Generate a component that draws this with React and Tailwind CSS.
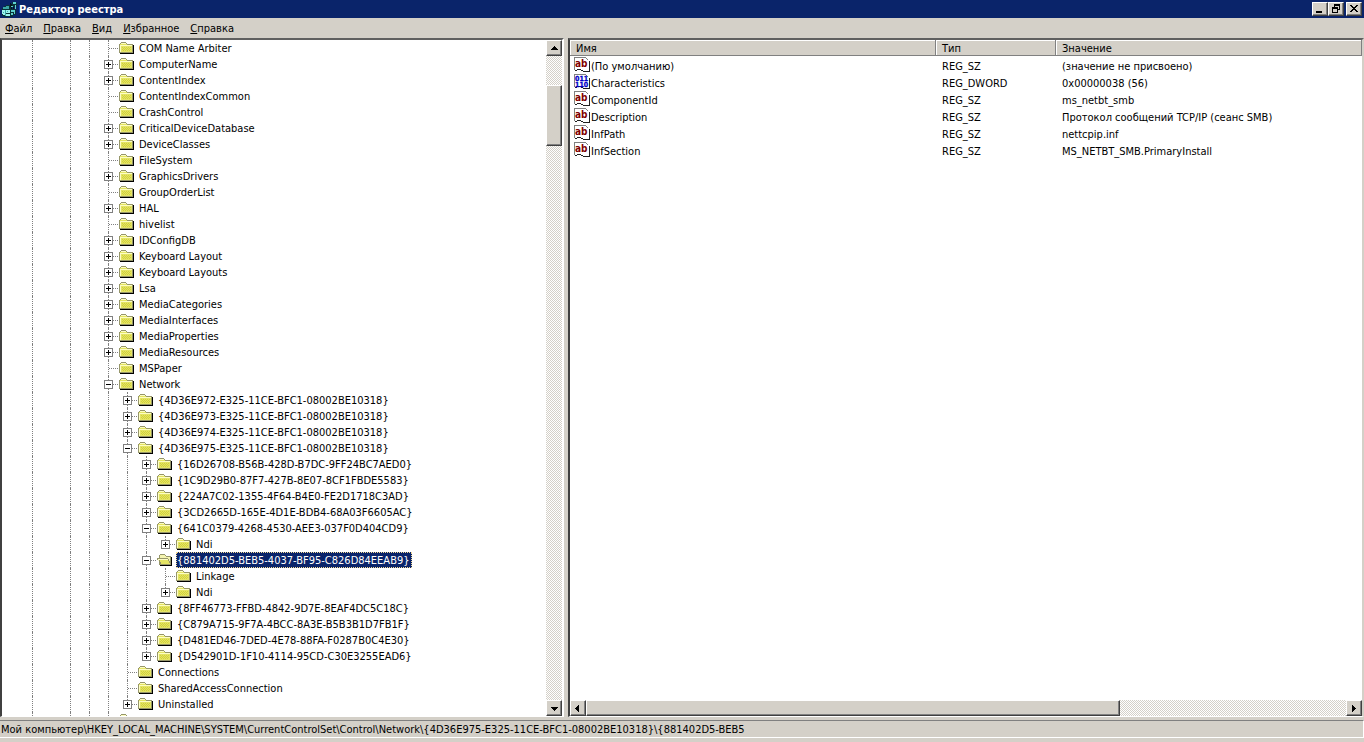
import { useState } from 'react';
import { clsx } from 'clsx';

const GUID_975 = '{4D36E975-E325-11CE-BFC1-08002BE10318}';

// guides: one character for each ancestor column, '|' draws the line through
const TREE = [
  { name: 'COM Name Arbiter' },
  { name: 'ComputerName', box: '+' },
  { name: 'ContentIndex', box: '+' },
  { name: 'ContentIndexCommon' },
  { name: 'CrashControl' },
  { name: 'CriticalDeviceDatabase', box: '+' },
  { name: 'DeviceClasses', box: '+' },
  { name: 'FileSystem' },
  { name: 'GraphicsDrivers', box: '+' },
  { name: 'GroupOrderList' },
  { name: 'HAL', box: '+' },
  { name: 'hivelist' },
  { name: 'IDConfigDB', box: '+' },
  { name: 'Keyboard Layout', box: '+' },
  { name: 'Keyboard Layouts', box: '+' },
  { name: 'Lsa', box: '+' },
  { name: 'MediaCategories', box: '+' },
  { name: 'MediaInterfaces', box: '+' },
  { name: 'MediaProperties', box: '+' },
  { name: 'MediaResources', box: '+' },
  { name: 'MSPaper' },
  { name: 'Network', box: '-' },
  { name: '{4D36E972-E325-11CE-BFC1-08002BE10318}', box: '+', guides: '|' },
  { name: '{4D36E973-E325-11CE-BFC1-08002BE10318}', box: '+', guides: '|' },
  { name: '{4D36E974-E325-11CE-BFC1-08002BE10318}', box: '+', guides: '|' },
  { name: GUID_975, box: '-', guides: '|' },
  { name: '{16D26708-B56B-428D-B7DC-9FF24BC7AED0}', box: '+', guides: '||' },
  { name: '{1C9D29B0-87F7-427B-8E07-8CF1FBDE5583}', box: '+', guides: '||' },
  { name: '{224A7C02-1355-4F64-B4E0-FE2D1718C3AD}', box: '+', guides: '||' },
  { name: '{3CD2665D-165E-4D1E-BDB4-68A03F6605AC}', box: '+', guides: '||' },
  { name: '{641C0379-4268-4530-AEE3-037F0D404CD9}', box: '-', guides: '||' },
  { name: 'Ndi', box: '+', guides: '|||', last: true },
  { name: '{881402D5-BEB5-4037-BF95-C826D84EEAB9}', box: '-', guides: '||', open: true },
  { name: 'Linkage', guides: '|||' },
  { name: 'Ndi', box: '+', guides: '|||', last: true },
  { name: '{8FF46773-FFBD-4842-9D7E-8EAF4DC5C18C}', box: '+', guides: '||' },
  { name: '{C879A715-9F7A-4BCC-8A3E-B5B3B1D7FB1F}', box: '+', guides: '||' },
  { name: '{D481ED46-7DED-4E78-88FA-F0287B0C4E30}', box: '+', guides: '||' },
  { name: '{D542901D-1F10-4114-95CD-C30E3255EAD6}', box: '+', guides: '||', last: true },
  { name: 'Connections', guides: '|' },
  { name: 'SharedAccessConnection', guides: '|' },
  { name: 'Uninstalled', box: '+', guides: '|', last: true },
  { name: 'NetworkProvider' }
];

const VALUES = [
  { name: '(По умолчанию)', type: 'REG_SZ', data: '(значение не присвоено)' },
  { name: 'Characteristics', type: 'REG_DWORD', data: '0x00000038 (56)' },
  { name: 'ComponentId', type: 'REG_SZ', data: 'ms_netbt_smb' },
  { name: 'Description', type: 'REG_SZ', data: 'Протокол сообщений TCP/IP (сеанс SMB)' },
  { name: 'InfPath', type: 'REG_SZ', data: 'nettcpip.inf' },
  { name: 'InfSection', type: 'REG_SZ', data: 'MS_NETBT_SMB.PrimaryInstall' }
];

const MENU = ['Файл', 'Правка', 'Вид', 'Избранное', 'Справка'];

const raised =
  'bg-[#d4d0c8] border border-t-white border-l-white border-r-[#404040] border-b-[#404040] shadow-[inset_-1px_-1px_0_#808080]';
const track =
  'bg-[repeating-conic-gradient(#ffffff_0_25%,#d4d0c8_0_50%)] bg-[length:2px_2px]';

const AppIcon = () => (
  <svg width="16" height="16" viewBox="0 0 16 16" shapeRendering="crispEdges" aria-hidden="true">
    <path d="M0 7h1V6h1V5h2V4h4v2h2v2h4v6h-3v2H2v-1H0z" fill="#0a3238" />
    <path d="M1 6h3v2H1zM4 5h3v3H4z" fill="#3aa6a6" />
    <path d="M0 9h3v5H1v-1H0zM4 9h4v3H4zM3 13h5v2H3z" fill="#9af4ee" />
    <path d="M3 9h1v6H3zM5 10h1v1H5zM1 11h1v1H1z" fill="#3aa6a6" />
    <path d="M9 9h4v2H9zM9 12h2v2H9zM12 11h1v2h-1z" fill="#5ed0cc" />
    <path d="M8 2h1v1h1v5H9V6H8zM11 4h1v4h-1z" fill="#06181c" />
    <path d="M10 1h4v1h1v3h-1v1h-4z" fill="#0a3238" />
    <path d="M11 1h3v2h-3zM13 4h1v4h-1zM9 5h2v1H9z" fill="#5ed0cc" />
  </svg>
);

const Folder = ({ open }) => (
  <svg className="shrink-0" width="17" height="16" viewBox="0 0 17 16" shapeRendering="crispEdges" aria-hidden="true">
    {open ? (
      <>
        <path d="M4 2h5v1h1v1h5v9H3V3h1z" fill="#96966a" />
        <path d="M4 3h5v1h1v1h4v7H4z" fill="#f4f4b0" />
        <path d="M1 6h11v1h1v2h1v2h1v2H4v-2H3V9H2V8H1z" fill="#96966a" />
        <path d="M2 7h10v2h1v2h1v1H5v-2H4V8H2z" fill="#e4e464" />
        <path d="M2 7h10v1H3v1H2z" fill="#fdfdc4" />
        <path d="M15 5h1v9H4v-1h11z" fill="#000000" />
      </>
    ) : (
      <>
        <path d="M3 2h5v1h1v1h6v9H1V4h1V3h1z" fill="#96966a" />
        <path d="M3 3h5v1h1v1h5v7H2V4h1z" fill="#e4e464" />
        <path d="M3 3h5v1H3zM2 5h12v1H3v6H2z" fill="#fdfdc4" />
        <path
          d="M4 7h1v1H4zM6 7h1v1H6zM8 7h1v1H8zM10 7h1v1h-1zM12 7h1v1h-1zM5 8h1v1H5zM7 8h1v1H7zM9 8h1v1H9zM11 8h1v1h-1zM4 9h1v1H4zM6 9h1v1H6zM8 9h1v1H8zM10 9h1v1h-1zM12 9h1v1h-1zM5 10h1v1H5zM7 10h1v1H7zM9 10h1v1H9zM11 10h1v1h-1z"
          fill="#d2d23c"
        />
        <path d="M15 5h1v9H2v-1h13z" fill="#000000" />
      </>
    )}
  </svg>
);

const ValueIcon = ({ binary }) => (
  <svg className="shrink-0" width="17" height="16" viewBox="0 0 17 16" aria-hidden="true">
    <g shapeRendering="crispEdges">
      <path d="M1 1h11l3 3v10H1z" fill="#ffffff" />
      <path d="M0 0h12v1H1v12H0zM12 1h1v1h-1zM13 2h1v1h-1z" fill="#808080" />
      <path d="M15 4h1v11h-2v-1h1zM1 13h2v1H1zM3 12h4v1H3zM7 13h2v1H7zM9 14h5v1H9z" fill="#202020" />
    </g>
    {binary ? (
      <g fill="#0000c8" stroke="#0000c8" strokeWidth="0.3" fontFamily="'DejaVu Sans Condensed', 'DejaVu Sans', sans-serif" fontWeight="bold" fontSize="7">
        <text x="1" y="7">011</text>
        <text x="1" y="13">110</text>
      </g>
    ) : (
      <text x="1" y="10" fill="#800000" fontFamily="'DejaVu Sans Condensed', 'DejaVu Sans', sans-serif" fontWeight="bold" fontSize="10">
        ab
      </text>
    )}
  </svg>
);

const WindowButton = ({ label, className, children }) => (
  <button type="button" aria-label={label} className={clsx('flex h-[14px] w-4 items-center justify-center', raised, className)}>
    <svg width="12" height="10" viewBox="0 0 12 10" shapeRendering="crispEdges" aria-hidden="true">
      {children}
    </svg>
  </button>
);

const ARROWS = {
  up: 'M3 6h7v-1H9v-1H8v-1H7v-1H6v1H5v1H4v1H3z',
  down: 'M3 3h7v1H9v1H8v1H7v1H6v-1H5v-1H4v-1H3z',
  left: 'M7 1v7H6v-1H5v-1H4v-1H3v-1h1v-1h1v-1h1v-1z',
  right: 'M4 1v7h1v-1h1v-1h1v-1h1v-1H7v-1H6v-1H5v-1z'
};

const ScrollButton = ({ dir, label }) => (
  <button type="button" aria-label={label} className={clsx('flex size-4 shrink-0 items-center justify-center', raised)}>
    <svg width="12" height="9" viewBox="0 0 12 9" shapeRendering="crispEdges" aria-hidden="true">
      <path d={ARROWS[dir]} />
    </svg>
  </button>
);

const Guide = ({ line = true }) => (
  <span className="flex w-[19px] shrink-0 pl-[9px]">
    {line && <span className="border-l border-dotted border-[#808080]" />}
  </span>
);

const Branch = ({ box, last, name }) => (
  <span className="relative flex w-[19px] shrink-0 pl-[9px]">
    <span className={clsx('border-l border-dotted border-[#808080]', last && 'h-2')} />
    <span className="mt-2 h-px flex-1 border-t border-dotted border-[#808080]" />
    {box && (
      <button
        type="button"
        aria-label={(box === '+' ? 'Развернуть ' : 'Свернуть ') + name}
        className="absolute top-1 left-[5px] size-[9px] border border-[#808080] bg-white"
      >
        <svg width="7" height="7" viewBox="0 0 7 7" shapeRendering="crispEdges" className="block" aria-hidden="true">
          <path d={box === '+' ? 'M1 3h5v1H1zM3 1h1v5H3z' : 'M1 3h5v1H1z'} />
        </svg>
      </button>
    )}
  </span>
);

const TreeRow = ({ item, selected, onSelect }) => (
  <li className="flex h-4">
    <Guide />
    <Guide line={false} />
    <Guide />
    <Guide />
    {(item.guides || '').split('').map((g, idx) => (
      <Guide key={idx} line={g === '|'} />
    ))}
    <Branch box={item.box} last={item.last} name={item.name} />
    <Folder open={item.open} />
    <button
      type="button"
      onClick={onSelect}
      className={clsx(
        'ml-[3px] border border-dotted pt-0.5 pr-px leading-3 whitespace-nowrap',
        selected ? 'border-[#f5db95] bg-[#0a246a] text-white' : 'border-transparent'
      )}
    >
      {item.name}
    </button>
  </li>
);

const TreePane = () => {
  const [selected, setSelected] = useState(32);

  return (
    <section aria-label="Разделы реестра" className="flex w-[564px] shrink-0 border-2 border-b border-[#404040] border-t-[#606060] border-r-white border-b-white bg-white">
      <ul className="min-h-0 flex-1 overflow-hidden pl-[21px]">
        {TREE.map((item, idx) => (
          <TreeRow key={idx} item={item} selected={idx === selected} onSelect={() => setSelected(idx)} />
        ))}
      </ul>
      <div className={clsx('flex w-4 flex-col', track)}>
        <ScrollButton dir="up" label="Вверх" />
        <div className="flex min-h-0 flex-1 flex-col">
          <div className="h-[4.5%]" />
          <div className={clsx('h-[9.5%]', raised)} />
        </div>
        <ScrollButton dir="down" label="Вниз" />
      </div>
    </section>
  );
};

const HeaderCell = ({ className, children }) => (
  <th
    scope="col"
    className={clsx('h-4 border-r border-b border-[#808080] bg-[#d4d0c8] pt-0.5 pl-1.5 text-left leading-[13px] font-normal shadow-[inset_1px_1px_0_#ffffff]', className)}
  >
    {children}
  </th>
);

const ValuesPane = () => (
  <section aria-label="Параметры" className="flex min-w-0 flex-1 flex-col border-2 border-b border-[#404040] border-t-[#606060] border-r-[#d4d0c8] border-b-white bg-white">
    <div className="min-h-0 flex-1 overflow-hidden">
      <table className="w-full table-fixed border-separate border-spacing-0">
        <thead>
          <tr>
            <HeaderCell className="w-[366px]">Имя</HeaderCell>
            <HeaderCell className="w-[120px]">Тип</HeaderCell>
            <HeaderCell>Значение</HeaderCell>
          </tr>
        </thead>
        <tbody>
          {VALUES.map((value) => (
            <tr key={value.name} className="h-[17px]">
              <td className="p-0 pl-1">
                <span className="flex h-[17px] items-center">
                  <ValueIcon binary={value.type === 'REG_DWORD'} />
                  <span className="pt-1 leading-[13px]">{value.name}</span>
                </span>
              </td>
              <td className="p-0 pt-1 pl-1.5 leading-[13px]">{value.type}</td>
              <td className="p-0 pt-1 pl-1.5 leading-[13px]">{value.data}</td>
            </tr>
          ))}
        </tbody>
      </table>
    </div>
    <div className={clsx('flex h-4', track)}>
      <ScrollButton dir="left" label="Влево" />
      <div className="flex min-w-0 flex-1">
        <div className={clsx('w-[70.3%]', raised)} />
      </div>
      <ScrollButton dir="right" label="Вправо" />
    </div>
  </section>
);

const App = () => (
  <div className="flex h-screen flex-col overflow-hidden bg-[#d4d0c8] font-['DejaVu_Sans_Condensed','DejaVu_Sans',sans-serif] text-[11px] text-black">
    <header className="flex h-[18px] items-center bg-[#0a246a] pr-0.5 pl-0.5 text-white">
      <AppIcon />
      <h1 className="flex-1 pt-px pl-px text-[11px] leading-4 font-bold">Редактор реестра</h1>
      <WindowButton label="Свернуть">
        <path d="M2 7h6v2H2z" />
      </WindowButton>
      <WindowButton label="Восстановить">
        <path d="M4 0h6v6H8V5h1V2H5v1H4zM2 3h6v6H2zM3 5v3h4V5z" fillRule="evenodd" />
      </WindowButton>
      <WindowButton label="Закрыть" className="ml-0.5">
        <path d="M2 1h2v1h1v1h2V2h1V1h2v1H9v1H8v1H7v1h1v1h1v1h1v1H8V7H7V6H5v1H4v1H2V7h1V6h1V5h1V4H4V3H3V2H2z" />
      </WindowButton>
    </header>

    <nav className="flex h-5 items-center gap-[11px] pt-0.5 pl-[5px]">
      {MENU.map((label) => (
        <button key={label} type="button" className="leading-[18px]">
          <span className="underline underline-offset-1">{label[0]}</span>
          {label.slice(1)}
        </button>
      ))}
    </nav>

    <main className="flex min-h-0 flex-1 gap-1">
      <TreePane />
      <ValuesPane />
    </main>

    <footer className="pt-[3px] pb-1">
      <p className="h-[18px] overflow-hidden border border-l-0 border-t-[#808080] border-r-white border-b-white pl-px leading-[17px] whitespace-nowrap">
        {`Мой компьютер\\HKEY_LOCAL_MACHINE\\SYSTEM\\CurrentControlSet\\Control\\Network\\${GUID_975}\\{881402D5-BEB5`}
      </p>
    </footer>
  </div>
);

export default App;
